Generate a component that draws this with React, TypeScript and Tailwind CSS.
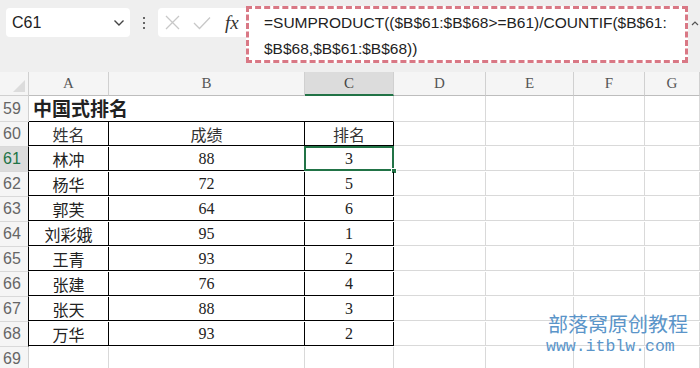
import React from 'react';

const rows = [
  { n: 61, name: '林冲', score: 88, rank: 3 },
  { n: 62, name: '杨华', score: 72, rank: 5 },
  { n: 63, name: '郭芙', score: 64, rank: 6 },
  { n: 64, name: '刘彩娥', score: 95, rank: 1 },
  { n: 65, name: '王青', score: 93, rank: 2 },
  { n: 66, name: '张建', score: 76, rank: 4 },
  { n: 67, name: '张天', score: 88, rank: 3 },
  { n: 68, name: '万华', score: 93, rank: 2 },
];

const cjk = "font-['SimSun','Noto_Sans_CJK_SC',sans-serif]";
const gridCols = 'grid grid-cols-[29px_80px_196px_89px_92px_88px_71px_1fr]';
const gray = 'border-r border-b border-[#d9d9d9]';

function RowHead({ n, active, table }: { n?: number; active?: boolean; table?: boolean }) {
  return (
    <div
      className={`h-full flex items-center pl-[3px] text-[16px] font-['Liberation_Sans',sans-serif] border-b border-[#d9d9d9] border-r ${
        table ? 'border-r-black' : 'border-r-[#d0d0d0]'
      } ${active ? 'bg-[#dcdcdc] text-[#217346]' : 'bg-[#f5f5f5] text-[#666]'}`}
    >
      {n}
    </div>
  );
}

function EmptyCells({ count, h }: { count: number; h: string }) {
  return (
    <>
      {Array.from({ length: count }).map((_, i) => (
        <div key={i} className={`${gray} ${h}`} />
      ))}
    </>
  );
}

export default function App() {
  return (
    <div className="w-[700px] h-[368px] overflow-hidden bg-white relative">
      {/* formula bar */}
      <div className="h-[72px] bg-[#efefef] flex items-start pt-[6px] pl-[6px]">
        <div className="mt-[2px] w-[124px] h-[29px] bg-white rounded-[4px] flex items-center justify-between pl-[6px] pr-[4px] text-[16px] text-[#222] font-['Liberation_Sans',sans-serif]">
          <span>C61</span>
          <svg width="12" height="8" viewBox="0 0 12 8" className="mr-[1px]">
            <path d="M1.5 1.5 L6 6 L10.5 1.5" fill="none" stroke="#444" strokeWidth="1.4" />
          </svg>
        </div>
        <div className="w-[28px] h-[33px] flex flex-col items-center justify-center gap-[3px]">
          <span className="w-[2px] h-[2px] bg-[#666]" />
          <span className="w-[2px] h-[2px] bg-[#666]" />
          <span className="w-[2px] h-[2px] bg-[#666]" />
        </div>
        <div className="mt-[2px] w-[88px] h-[29px] bg-white rounded-l-[4px] flex items-center pl-[7px]">
          <svg width="15" height="15" viewBox="0 0 15 15">
            <path d="M1 1 L14 14 M14 1 L1 14" stroke="#c8c8c8" strokeWidth="1.3" />
          </svg>
          <svg width="18" height="14" viewBox="0 0 18 14" className="ml-[13px]">
            <path d="M1 7 L6.5 12.5 L17 1.5" fill="none" stroke="#c8c8c8" strokeWidth="1.3" />
          </svg>
          <span className="ml-[14px] text-[19px] italic text-[#333] font-['Liberation_Serif',serif] leading-none">fx</span>
        </div>
        <div className="w-[442px] h-[57px] bg-white border-[3px] border-dashed border-[#d97885] pl-[15px] pt-[1px] text-[15.5px] leading-[26px] text-[#222] font-['Liberation_Sans',sans-serif]">
          <div>=SUMPRODUCT(($B$61:$B$68&gt;=B61)/COUNTIF($B$61:</div>
          <div>$B$68,$B$61:$B$68))</div>
        </div>
        <svg width="8" height="6" viewBox="0 0 8 6" className="ml-[3px] mt-[14px]">
          <path d="M1 5 L4 2 L7 5" fill="none" stroke="#555" strokeWidth="1.2" />
        </svg>
      </div>

      {/* sheet */}
      <div className={`${gridCols} text-[#222]`}>
        {/* column header row */}
        <div className="h-[24px] bg-[#f5f5f5] border-r border-b border-[#d0d0d0] relative">
          <svg width="12" height="12" viewBox="0 0 12 12" className="absolute right-[3px] bottom-[3px]">
            <path d="M12 0 L12 12 L0 12 Z" fill="#dcdcdc" />
          </svg>
        </div>
        {['A', 'B', 'C', 'D', 'E', 'F', 'G'].map((c) => (
          <div
            key={c}
            className={`h-[24px] flex items-center justify-center text-[15px] font-['Liberation_Serif',serif] border-r border-[#d0d0d0] ${
              c === 'C' ? 'bg-[#dcdcdc] border-b-2 border-b-[#217346] text-[#444]' : 'bg-[#f5f5f5] border-b border-b-[#bdbdbd] text-[#555]'
            }`}
          >
            {c}
          </div>
        ))}

        {/* row 59 */}
        <RowHead n={59} />
        <div className={`col-span-2 h-[26px] border-b border-black flex items-center pl-[4px] text-[19px] font-bold whitespace-nowrap ${cjk}`}>
          中国式排名
        </div>
        <div className="h-[26px] border-r border-[#d9d9d9] border-b border-b-black" />
        <EmptyCells count={4} h="h-[26px]" />

        {/* row 60 */}
        <RowHead n={60} table />
        <div className={`h-[24px] border-r border-b border-black flex items-center justify-center text-[16px] text-[#333] ${cjk}`}>姓名</div>
        <div className={`h-[24px] border-r border-b border-black flex items-center justify-center text-[16px] text-[#333] ${cjk}`}>成绩</div>
        <div className={`h-[24px] border-r border-b border-black flex items-center justify-center text-[16px] text-[#333] ${cjk}`}>排名</div>
        <EmptyCells count={4} h="h-[24px]" />

        {rows.map((r) => (
          <React.Fragment key={r.n}>
            <RowHead n={r.n} table active={r.n === 61} />
            <div className={`h-[24px] border-r border-b border-black flex items-center justify-center text-[16px] ${cjk}`}>{r.name}</div>
            <div className="h-[24px] border-r border-b border-black flex items-center justify-center text-[16px] font-['Liberation_Serif',serif]">{r.score}</div>
            <div className="h-[24px] border-r border-b border-black flex items-center justify-center text-[16px] font-['Liberation_Serif',serif] relative">
              {r.rank}
              {r.n === 61 && (
                <>
                  <div className="absolute -left-px -top-px -right-px -bottom-px border-2 border-[#217346]" />
                  <div className="absolute -right-[4px] -bottom-[4px] w-[6px] h-[6px] bg-[#217346] border border-white" />
                </>
              )}
            </div>
            <EmptyCells count={4} h="h-[24px]" />
          </React.Fragment>
        ))}

        {/* row 69 and the next, cut off */}
        <RowHead n={69} />
        <EmptyCells count={7} h="h-[24px]" />
        <RowHead />
        <EmptyCells count={7} h="h-[24px]" />
      </div>

      {/* watermark */}
      <div className="absolute left-[548px] top-[313px] flex flex-col items-start text-[#5b95c9] pointer-events-none">
        <span className="text-[20px] leading-[22px] font-['Noto_Sans_CJK_SC',sans-serif]">部落窝原创教程</span>
        <span className="mt-[2px] text-[16.5px] leading-[20px] -ml-[2px] font-['Liberation_Mono',monospace]">www.itblw.com</span>
      </div>
    </div>
  );
}
